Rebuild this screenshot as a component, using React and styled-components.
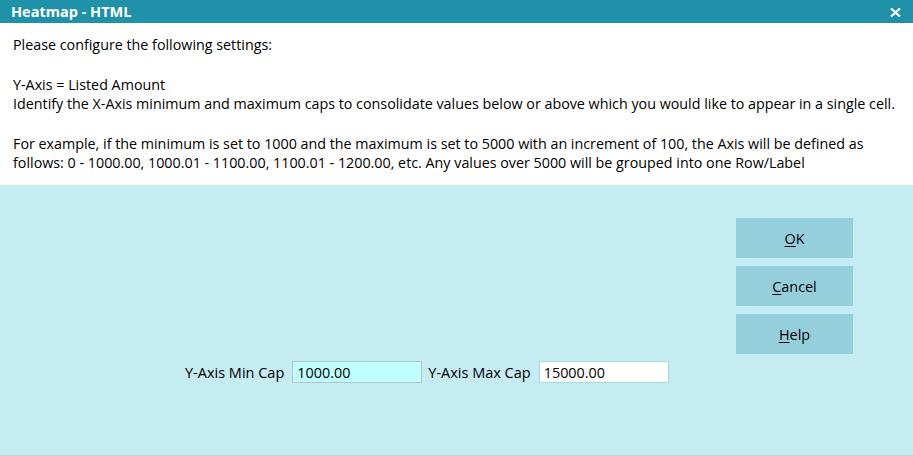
import styled, { createGlobalStyle } from 'styled-components'

const GlobalStyle = createGlobalStyle`
    html, body {
        margin: 0;
        padding: 0;
        background: #c5ebf3;
    }
    body {
        font-family: "Open Sans", "Noto Sans", sans-serif;
        color: #000;
    }
`

export default function App() {
    return (
        <Dialog>
            <GlobalStyle />
            <TitleBar>
                <Title>Heatmap - HTML</Title>
                <Close>
                    <svg width="11" height="9" viewBox="0 0 11 9">
                        <path d="M1 0.5 L10 8.5 M10 0.5 L1 8.5" stroke="#fff" strokeWidth="2.2" />
                    </svg>
                </Close>
            </TitleBar>
            <Info>
                <p>Please configure the following settings:</p>
                <p>
                    Y-Axis = Listed Amount<br />
                    Identify the X-Axis minimum and maximum caps to consolidate values below or above which you would like to appear in a single cell.
                </p>
                <p>
                    For example, if the minimum is set to 1000 and the maximum is set to 5000 with an increment of 100, the Axis will be defined as<br />
                    follows: 0 - 1000.00, 1000.01 - 1100.00, 1100.01 - 1200.00, etc. Any values over 5000 will be grouped into one Row/Label
                </p>
            </Info>
            <Panel>
                <Buttons>
                    <Button><u>O</u>K</Button>
                    <Button><u>C</u>ancel</Button>
                    <Button><u>H</u>elp</Button>
                </Buttons>
                <Fields>
                    <Label>Y-Axis Min Cap</Label>
                    <Input $focused defaultValue="1000.00" />
                    <Label>Y-Axis Max Cap</Label>
                    <Input defaultValue="15000.00" />
                </Fields>
            </Panel>
        </Dialog>
    )
}

const Dialog = styled.div`
    width: 913px;
    height: 456px;
    display: flex;
    flex-direction: column;
    background: #c5ebf3;
    box-sizing: border-box;
    border-bottom: 1px solid #c8d0d4;
`

const TitleBar = styled.div`
    height: 23px;
    background: #1f91a9;
    display: flex;
    align-items: center;
    justify-content: space-between;
    padding: 0 12px 0 11px;
    flex-shrink: 0;
`

const Title = styled.div`
    color: #fff;
    font-weight: 700;
    font-size: 14.5px;
`

const Close = styled.div`
    display: flex;
    align-items: center;
    padding-top: 2px;
`

const Info = styled.div`
    height: 162px;
    box-sizing: border-box;
    flex-shrink: 0;
    background: #fff;
    padding: 12px 0 0 13px;
    font-size: 14.3px;
    line-height: 19px;
    white-space: nowrap;
    p {
        margin: 0 0 21px;
    }
    p:last-child {
        margin-bottom: 0;
    }
`

const Panel = styled.div`
    flex: 1;
    display: flex;
    flex-direction: column;
`

const Buttons = styled.div`
    align-self: flex-end;
    margin: 33px 60px 0 0;
    display: flex;
    flex-direction: column;
    gap: 8px;
`

const Button = styled.button`
    width: 117px;
    height: 40px;
    border: none;
    background: #96cfdc;
    font-family: "Open Sans", "Noto Sans", sans-serif;
    font-size: 14.4px;
    color: #000;
    padding: 0;
    u {
        text-underline-offset: 2px;
    }
`

const Fields = styled.div`
    display: flex;
    align-items: center;
    margin: 7px 0 0 185px;
`

const Label = styled.span`
    font-size: 14.5px;
    margin-right: 8px;
`

const Input = styled.input`
    width: 130px;
    height: 22px;
    box-sizing: border-box;
    font-family: "Open Sans", "Noto Sans", sans-serif;
    font-size: 14.4px;
    padding: 0 4px;
    margin-right: 6px;
    outline: none;
    border: 1px solid ${p => (p.$focused ? '#b4c4c8' : '#a4d8e2')};
    background: ${p => (p.$focused ? '#bfffff' : '#fff')};
    color: #000;
`
